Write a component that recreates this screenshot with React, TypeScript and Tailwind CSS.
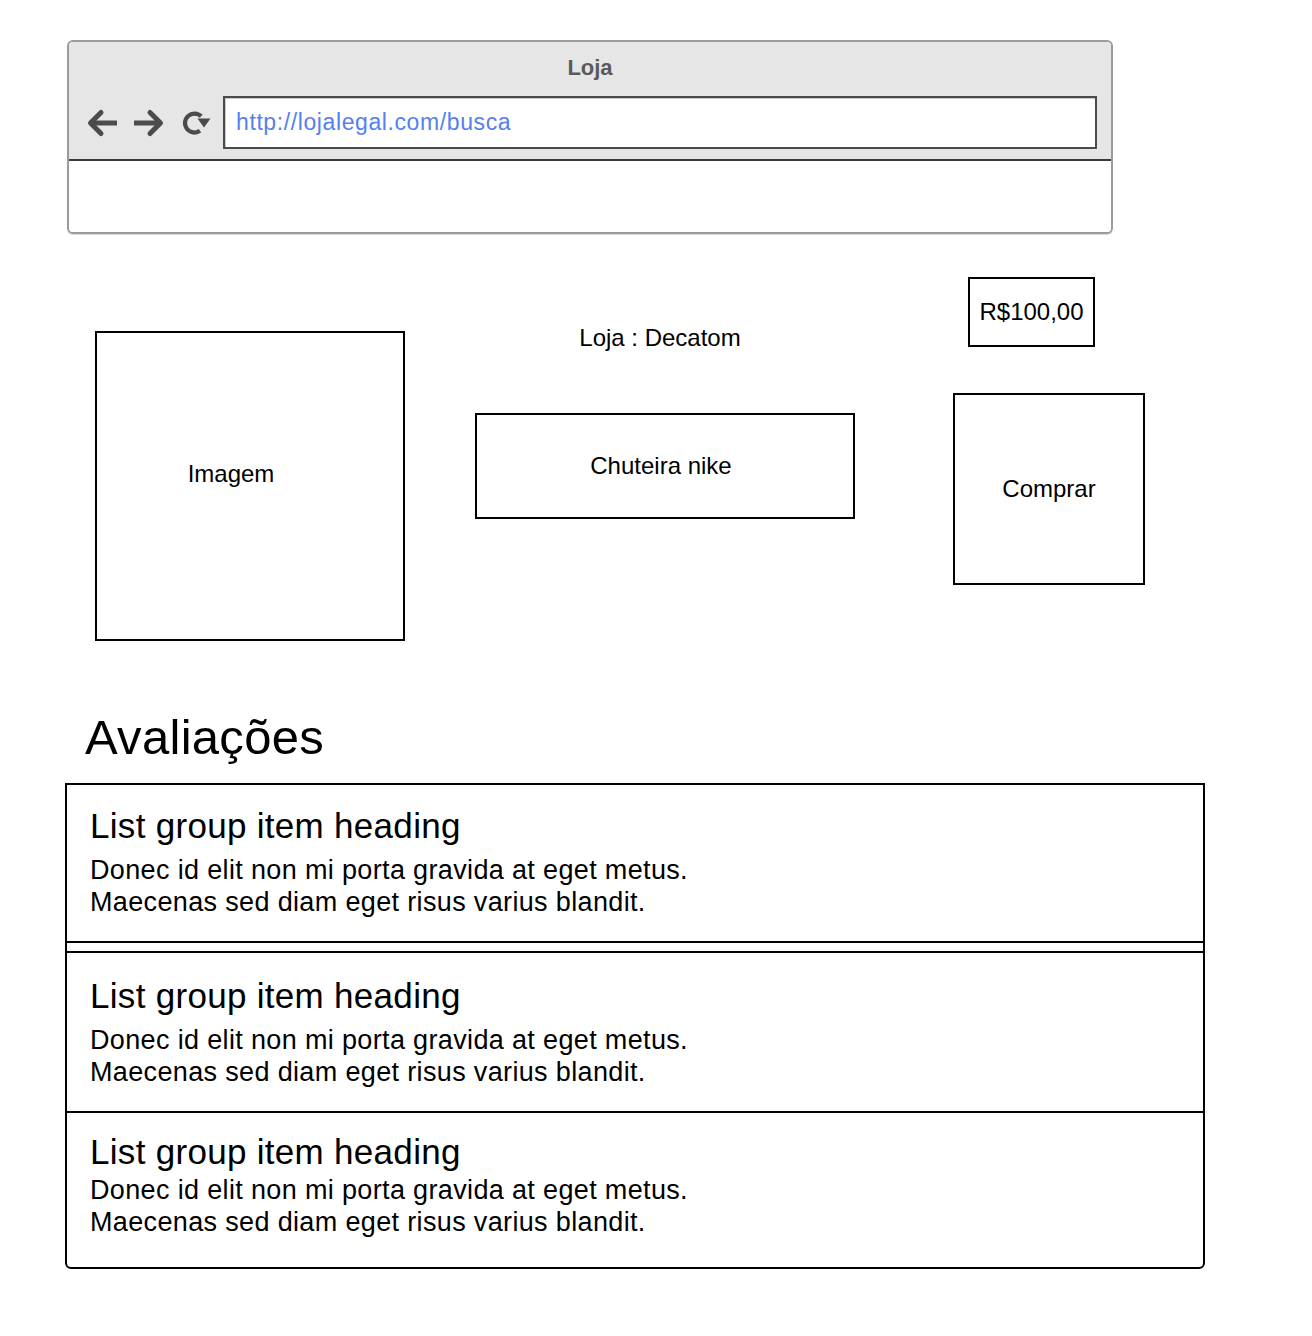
import React from "react";

function BackArrow() {
  return (
    <svg width="34" height="30" viewBox="0 0 34 30" fill="none">
      <path d="M32 15 H7" stroke="#4b4b4b" strokeWidth="5" />
      <path d="M16 4.5 L5.5 15 L16 25.5" stroke="#4b4b4b" strokeWidth="5" strokeLinecap="round" strokeLinejoin="round" />
    </svg>
  );
}

function ForwardArrow() {
  return (
    <svg width="34" height="30" viewBox="0 0 34 30" fill="none">
      <path d="M2 15 H27" stroke="#4b4b4b" strokeWidth="5" />
      <path d="M18 4.5 L28.5 15 L18 25.5" stroke="#4b4b4b" strokeWidth="5" strokeLinecap="round" strokeLinejoin="round" />
    </svg>
  );
}

function Reload() {
  return (
    <svg width="32" height="30" viewBox="0 0 32 30" fill="none">
      <path d="M22.2 8.3 A9.5 9.5 0 1 0 21 22.8" stroke="#4b4b4b" strokeWidth="4.2" />
      <polygon points="18.5,10.5 31.5,10.5 25,19.5" fill="#4b4b4b" />
    </svg>
  );
}

function Browser() {
  return (
    <div className="w-[1046px] h-[194px] border-2 border-[#9b9b9b] rounded-[6px] overflow-hidden flex flex-col bg-white shadow-[0_1px_1px_rgba(0,0,0,0.15)]">
      <div className="bg-[#e6e6e6] border-b-2 border-[#3a3a3a] flex flex-col">
        <div className="h-[50px] flex items-center justify-center">
          <span className="font-bold text-[22px] text-[#5a5a5a]">Loja</span>
        </div>
        <div className="mt-[4px] mb-[10px] flex items-center pl-[16px] pr-[14px]">
          <BackArrow />
          <div className="ml-[13px]">
            <ForwardArrow />
          </div>
          <div className="ml-[13px]">
            <Reload />
          </div>
          <div className="ml-[12px] flex-1 h-[53px] border-2 border-[#4a4a4a] bg-white shadow-[inset_1px_1px_0_#c8c8c8] flex items-center pl-[11px]">
            <span className="text-[23px] text-[#5580f0] tracking-[0.6px]">http://lojalegal.com/busca</span>
          </div>
        </div>
      </div>
      <div className="flex-1 bg-white" />
    </div>
  );
}

const items = [
  { pt: "pt-[21px]", gap: "mt-[8px]", pb: "pb-[23px]", border: "border-b-2 border-black" },
  { pt: "pt-[23px]", gap: "mt-[8px]", pb: "pb-[23px]", border: "border-y-2 border-black" },
  { pt: "pt-[19px]", gap: "mt-[2px]", pb: "pb-[29px]", border: "" },
];

function ListItem({ idx }: { idx: number }) {
  const it = items[idx];
  return (
    <div className={`px-[23px] ${it.pt} ${it.pb} ${it.border}`}>
      <div className="text-[35px] leading-[40px] tracking-[0.3px]">List group item heading</div>
      <div className={`${it.gap} text-[27px] leading-[32px] tracking-[0.35px]`}>
        <div>Donec id elit non mi porta gravida at eget metus.</div>
        <div>Maecenas sed diam eget risus varius blandit.</div>
      </div>
    </div>
  );
}

export default function App() {
  return (
    <div className="w-[1312px] h-[1336px] bg-white text-black overflow-hidden font-['Liberation_Sans',Arial,Helvetica,sans-serif]">
      <div className="pt-[40px] pl-[67px]">
        <Browser />
      </div>

      <div className="mt-[43px] flex items-start">
        <div className="ml-[95px] mt-[54px] w-[310px] h-[310px] border-2 border-black flex items-center justify-center pr-[38px] pb-[24px]">
          <span className="text-[24px] leading-[28px]">Imagem</span>
        </div>

        <div className="ml-[70px] w-[380px] flex flex-col">
          <div className="mt-[47px] h-[28px] flex justify-center pr-[10px]">
            <span className="text-[24px] leading-[28px]">Loja : Decatom</span>
          </div>
          <div className="mt-[61px] h-[106px] border-2 border-black flex items-center justify-center pr-[8px]">
            <span className="text-[24px] leading-[28px]">Chuteira nike</span>
          </div>
        </div>

        <div className="ml-[98px] w-[192px] flex flex-col">
          <div className="ml-[15px] w-[127px] h-[70px] border-2 border-black flex items-center justify-center">
            <span className="text-[24px] leading-[28px]">R$100,00</span>
          </div>
          <div className="mt-[46px] w-[192px] h-[192px] border-2 border-black flex items-center justify-center">
            <span className="text-[24px] leading-[28px]">Comprar</span>
          </div>
        </div>
      </div>

      <div className="mt-[68px] pl-[85px] h-[56px] text-[49px] leading-[56px] tracking-[0.3px]">Avaliações</div>

      <div className="mt-[18px] ml-[65px] w-[1140px] border-2 border-black rounded-b-[6px]">
        <ListItem idx={0} />
        <div className="h-[8px]" />
        <ListItem idx={1} />
        <ListItem idx={2} />
      </div>
    </div>
  );
}
